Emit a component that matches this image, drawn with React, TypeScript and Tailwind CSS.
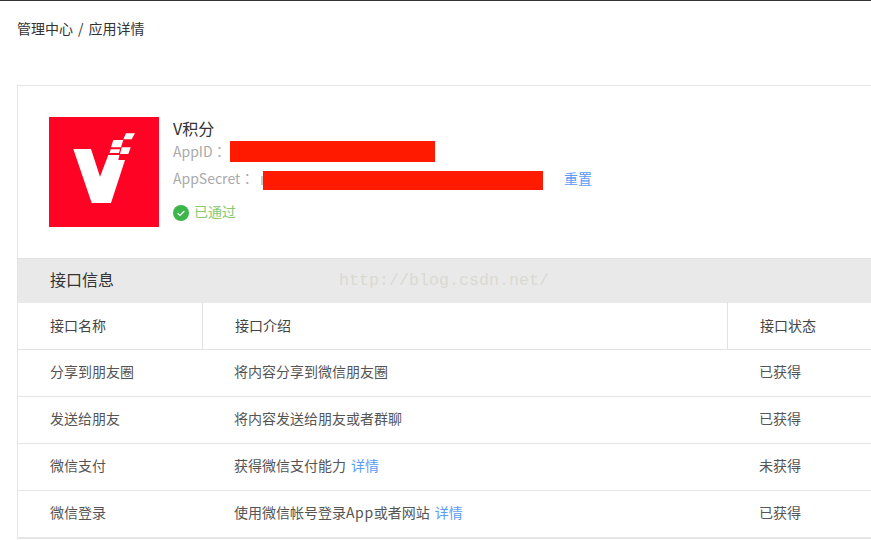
const fontStack = { fontFamily: '"Noto Sans CJK SC", "Liberation Sans", sans-serif' }

const rows = [
  { name: '分享到朋友圈', intro: <>将内容分享到微信朋友圈</>, status: '已获得' },
  { name: '发送给朋友', intro: <>将内容发送给朋友或者群聊</>, status: '已获得' },
  { name: '微信支付', intro: <>获得微信支付能力</>, link: true, status: '未获得' },
  {
    name: '微信登录',
    intro: (
      <span>
        使用微信帐号登录<span className="tracking-[0.6px]">App</span>或者网站
      </span>
    ),
    link: true,
    status: '已获得',
  },
]

function Logo() {
  return (
    <svg width="110" height="110" viewBox="0 0 110 110" className="shrink-0">
      <rect width="110" height="110" fill="#ff0325" />
      <path d="M24.3 32H42L51 59.7L59.3 38H70.5L69.3 43H76L62 86H42.7Z" fill="#fff" />
      <path
        d="M77 16.3H86L82.7 22.3H74.3Z M64.3 23H74.3L72 30.3H62Z M72.7 30.3H81.7L79.3 37H71Z M61.7 32.3H71L70 36H60.5Z"
        fill="#fff"
      />
    </svg>
  )
}

function CheckBadge() {
  return (
    <svg width="16" height="16" viewBox="0 0 16 16" className="shrink-0">
      <circle cx="8" cy="8" r="8" fill="#3cb54a" />
      <path d="M4.6 8.2L7 10.4L11.4 6" fill="none" stroke="#fff" strokeWidth="1.2" />
    </svg>
  )
}

export default function App() {
  return (
    <div className="h-[540px] w-[871px] overflow-hidden border-t border-[#333] bg-white" style={fontStack}>
      <div className="flex gap-[5px] pl-[17px] pt-[17px] text-sm leading-5 text-[#333]">
        <span>管理中心</span>
        <span>/</span>
        <span>应用详情</span>
      </div>

      <div className="mt-[47px] ml-[17px] w-[900px] border border-[#e4e4e4]">
        <div className="flex gap-[14px] pb-[31px] pl-[31px] pt-[31px]">
          <Logo />
          <div className="flex flex-col">
            <div className="h-6 text-base leading-[22px] text-[#333]">V积分</div>
            <div className="flex h-[21px] items-center text-sm text-[#aaa]">
              <span className="w-[57px] pb-[1px] font-['Noto_Sans_CJK_TC',sans-serif]">AppID：</span>
              <span className="h-[21px] w-[205px] bg-[#ff1a00]" />
            </div>
            <div className="mt-[9px] flex h-[19px] items-center text-sm text-[#aaa]">
              <span className="w-[88px] pb-[6px] font-['Noto_Sans_CJK_TC',sans-serif]">AppSecret：</span>
              <span className="h-[9px] w-[2px] bg-[#ccc]" />
              <span className="h-[19px] w-[280px] bg-[#ff1a00]" />
              <span className="ml-[21px] pb-[6px] text-[#5b9cf6]">重置</span>
            </div>
            <div className="mt-[15px] flex h-4 items-center gap-[5px] text-sm text-[#86c96f]">
              <CheckBadge />
              <span className="pb-1">已通过</span>
            </div>
          </div>
        </div>

        <div className="relative flex h-[45px] items-center border-t border-[#e2e2e2] bg-[#e9e9e9] pb-1 pl-8 text-base text-[#333]">
          接口信息
          <span className="absolute left-[321px] top-[10px] font-['Liberation_Mono',monospace] text-[16.67px] leading-6 text-[#d9d9d3]">
            http://blog.csdn.net/
          </span>
        </div>

        <div className="grid h-[47px] grid-cols-[185px_525px_1fr] border-b border-[#e2e2e2] text-sm text-[#444]">
          <div className="flex items-center border-r border-[#e2e2e2] pb-[3px] pl-8">接口名称</div>
          <div className="flex items-center border-r border-[#e2e2e2] pb-[3px] pl-8">接口介绍</div>
          <div className="flex items-center pb-[3px] pl-8">接口状态</div>
        </div>

        {rows.map((row) => (
          <div
            key={row.name}
            className="grid h-[47px] grid-cols-[185px_525px_1fr] border-b border-[#e6e6e6] text-sm text-[#555]"
          >
            <div className="flex items-center pb-[5px] pl-8">{row.name}</div>
            <div className="flex items-center gap-[5px] pb-[5px] pl-[31px]">
              {row.intro}
              {row.link && <span className="text-[#5b9cf6]">详情</span>}
            </div>
            <div className="flex items-center pb-[5px] pl-[31px]">{row.status}</div>
          </div>
        ))}
      </div>
    </div>
  )
}
